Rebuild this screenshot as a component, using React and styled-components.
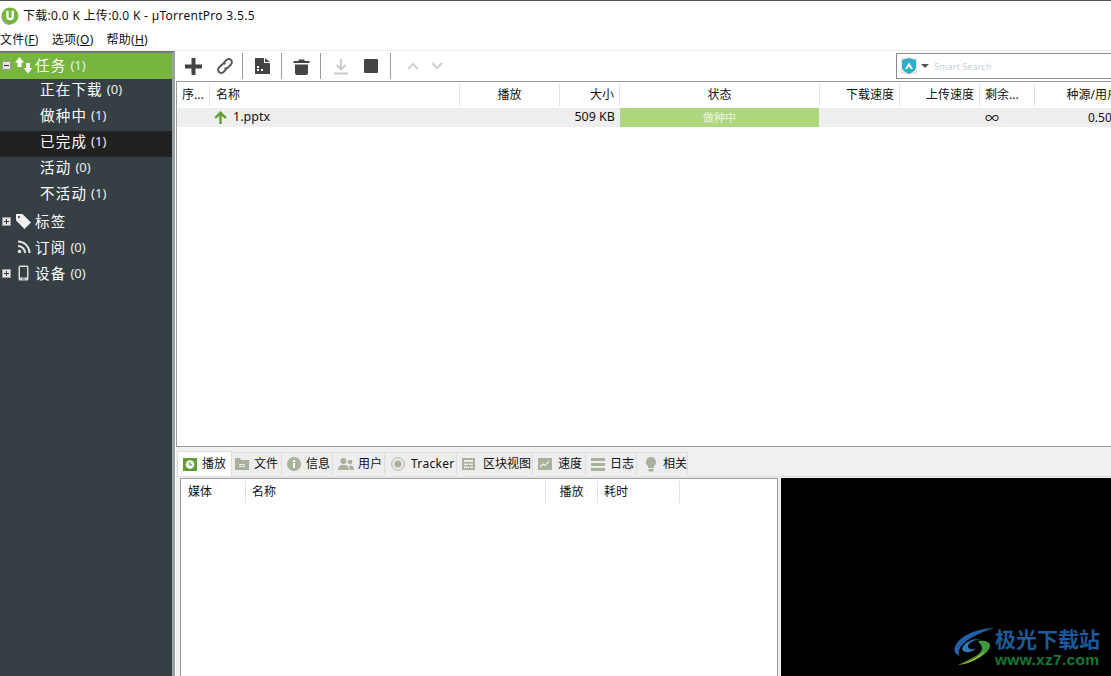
import React from "react";
import styled, { createGlobalStyle } from "styled-components";

const Global = createGlobalStyle`
  html, body { margin: 0; padding: 0; overflow: hidden; background: #fff; }
  * { box-sizing: border-box; }
`;
const FONT = `"Noto Sans", "Noto Sans CJK SC", sans-serif`;

const Page = styled.div`
  position: relative; width: 1111px; height: 676px; overflow: hidden;
  display: flex; flex-direction: column; background: #fff; color: #111;
  font: 12px/1 ${FONT};
`;
const TopStrip = styled.div`height: 1px; flex: none; background: #555;`;
const TitleBar = styled.div`
  height: 30px; flex: none; display: flex; align-items: center; gap: 4px; padding: 0 0 0 1px;
  font-size: 12px; letter-spacing: .3px; color: #111;
`;
const MenuBar = styled.div`
  height: 20px; flex: none; display: flex; gap: 13px; align-items: center; color: #111; font-size: 12px; letter-spacing: .25px;
  padding-bottom: 1px; border-bottom: 1px solid #eee;
`;
const Mnemonic = styled.span`text-decoration: underline;`;
const Main = styled.div`flex: 1; display: flex; min-height: 0;`;
const Sidebar = styled.div`
  width: 175px; flex: none; background: #353f44; border-right: 3px solid #9aa0a3; border-top: 2px solid #6f787c;
  color: #fff; display: flex; flex-direction: column;
`;
const TreeRow = styled.div`
  height: 26px; flex: none; display: flex; align-items: center;
  padding: 0 0 ${p => p.$child ? "6px" : "2px"} ${p => p.$child ? "40px" : "0"};
  background: ${p => p.$tone === "green" ? "#76b53e" : p.$tone === "dark" ? "#212121" : "transparent"};
  font-size: 14.5px; letter-spacing: 1.2px;
`;
const TreeCount = styled.span`font-size: 13px; margin-left: 4px; letter-spacing: 0; color: #e6f0f5;`;
const Expander = styled.span`
  width: 9px; height: 9px; flex: none; margin: 1px 0 0 2px; background: #e4e4e4; border: 1px solid #9a9a9a;
  position: relative;
  &::before { content: ""; position: absolute; left: 1px; right: 1px; top: 3px; height: 1px; background: #334; }
  ${p => p.$plus && `&::after { content: ""; position: absolute; top: 1px; bottom: 1px; left: 3px; width: 1px; background: #334; }`}
`;
const ExpanderGap = styled.span`width: 11px; flex: none;`;
const TreeIcon = styled.span`width: 23px; height: 20px; flex: none; display: flex; align-items: center; justify-content: center; margin-left: 1px;`;

const Content = styled.div`flex: 1; min-width: 0; display: flex; flex-direction: column; padding-left: 1px;`;
const Toolbar = styled.div`height: 30px; flex: none; display: flex; align-items: center; padding-left: 2px;`;
const ToolBtn = styled.span`width: ${p => p.$w || 31}px; height: 24px; flex: none; display: flex; align-items: center; justify-content: center;`;
const ToolSep = styled.span`width: 1px; height: 26px; margin: 0 ${p => p.$mr}px 0 ${p => p.$ml}px; flex: none; background: #9a9a9a;`;
const SearchBox = styled.div`
  margin-left: auto; width: 215px; height: 26px; border: 1px solid #8c8c8c; border-right: none; display: flex; align-items: center; padding-left: 4px; gap: 3px;
  color: #c4cfd8; font-size: 9px; letter-spacing: .1px; align-self: flex-end; margin-bottom: 2px;
`;
const Caret = styled.span`width: 0; height: 0; border: 4px solid transparent; border-top: 4px solid #555; border-bottom: none; margin: 0 2px 0 1px;`;

const TablePanel = styled.div`
  height: 366px; flex: none; border: 1px solid #999; border-width: 1px 0 1px 1px; background: #fff; overflow: hidden;
`;
const Row = styled.div`display: flex; height: ${p => p.$h}px; background: ${p => p.$bg || "transparent"}; align-items: center;`;
const HeadCell = styled.div`
  width: ${p => p.$w}px; flex: none; height: 22px; padding: 0 5px 0 ${p => p.$pl ?? 5}px; display: flex; align-items: center; white-space: nowrap; overflow: hidden;
  justify-content: ${p => p.$a === "r" ? "flex-end" : p.$a === "c" ? "center" : "flex-start"};
  border-right: 1px solid #e3e3e3; color: #111; font-size: 12px;
`;
const Cell = styled(HeadCell)`height: 19px; border-right: none; font-size: ${p => p.$fs || 12}px;`;
const NameCell = styled(Cell)`gap: 6px;`;
const StatusCell = styled.div`
  width: ${p => p.$w}px; flex: none; height: 19px; margin-right: 1px; background: #aed67c; color: #eef7e0; display: flex; align-items: center; justify-content: center; font-size: 11px;
`;
const TabStrip = styled.div`
  height: 30px; flex: none; background: #f0f0f0; display: flex; align-items: flex-end; padding: 0 0 1px 1px; border-bottom: 1px solid #ddd;
`;
const Tab = styled.div`
  height: ${p => p.$on ? "25px" : "23px"}; width: ${p => p.$w}px; flex: none; display: flex; align-items: center;
  gap: ${p => p.$gap}px; padding-left: ${p => p.$pad}px;
  background: ${p => p.$on ? "#fff" : "#eee"}; border: 1px solid #ddd; border-left-width: ${p => p.$on ? 1 : 0}px; border-bottom: none;
  font-size: 12px; color: #111; white-space: nowrap; overflow: hidden;
  margin-bottom: ${p => p.$on ? "-1px" : "0"}; position: relative;
`;
const TabLabel = styled.span`letter-spacing: ${p => p.$ls || 0}px;`;
const Lower = styled.div`flex: 1; min-height: 0; display: flex; background: #f0f0f0; padding: 1px 0 0 4px;`;
const MediaList = styled.div`width: 598px; flex: none; background: #fff; border: 1px solid #999; border-bottom: none; padding-top: 2px;`;
const MediaHead = styled(HeadCell)`height: 22px; font-size: 12px;`;
const Preview = styled.div`flex: 1; background: #000; margin-left: 3px;`;

const Watermark = styled.div`position: absolute; right: 6px; bottom: 5px; width: 156px; height: 47px;`;
const SwirlSvg = styled.svg`position: absolute; left: 3px; top: 3px;`;
const MarkTitle = styled.div`
  position: absolute; left: 46px; top: 2px; color: #1a5a9a; font: 700 21px/24px "Noto Sans CJK SC", sans-serif; white-space: nowrap;
`;
const MarkUrl = styled.div`
  position: absolute; left: 46px; top: 28px; color: #0e7a35; font: 700 15.5px/16px "Liberation Sans", sans-serif; white-space: nowrap; letter-spacing: .3px;
`;

const Gray = "#444";
const Off = "#c9c9c9";
const Tag = "#a9b09c";

const Logo = () => (
  <svg width="18" height="18" viewBox="0 0 17 17">
    <circle cx="8.500" cy="8.500" r="8" fill="#76b53e" />
    <path d="M5 3.500v5.500a3.600 3.600 0 0 0 7.200 0v-5.500h-2.200v5.500a1.400 1.400 0 0 1-2.800 0v-5.500z" fill="#fff" />
    <path d="M1 9c0 4.500 3 7.500 7.500 7.500" stroke="#9a9a9a" fill="none" />
  </svg>
);
const ArrowsIcon = () => (
  <svg width="20" height="20" viewBox="0 0 20 20" fill="#fff">
    <path d="M5.500 2 10 7.500H7.500V12h-4V7.500H1z" />
    <path d="M12 8h4v5h2.500L14 18.500 9.500 13H12z" fill="#f2f2f2" />
  </svg>
);
const TagIcon = () => (
  <svg width="17" height="17" viewBox="0 0 17 17" fill="#f0f0f0">
    <path fillRule="evenodd" d="M1 1h6.500L16 9.500 9.500 16 1 7.500zM4 3a1 1 0 1 0 0 2.200A1 1 0 0 0 4 3z" />
  </svg>
);
const RssIcon = () => (
  <svg width="14" height="14" viewBox="0 0 14 14" fill="none" stroke="#e2e2e2" strokeWidth="2">
    <circle cx="2.500" cy="11.500" r="1.800" fill="#e2e2e2" stroke="none" />
    <path d="M1 6a7 7 0 0 1 7 7" />
    <path d="M1 1.500A11.500 11.500 0 0 1 12.500 13" />
  </svg>
);
const PhoneIcon = () => (
  <svg width="11" height="16" viewBox="0 0 11 16">
    <rect x=".5" y=".5" width="10" height="15" rx="1.500" fill="#d8d8d8" />
    <rect x="2" y="2" width="7" height="10.500" fill="#353f44" />
    <rect x="4" y="13.300" width="3" height="1.200" fill="#777" />
  </svg>
);

const Plus = () => (
  <svg width="17" height="17" viewBox="0 0 17 17" fill={Gray}><path d="M6.500 0h4v6.500H17v4h-6.500V17h-4v-6.500H0v-4h6.500z" /></svg>
);
const LinkIcon = () => (
  <svg width="18" height="18" viewBox="0 0 18 18" fill="none" stroke="#555" strokeWidth="1.800">
    <path d="M7.500 6 10.500 3a3 3 0 0 1 4.500 4.500l-3 3a3 3 0 0 1-3.500.5" />
    <path d="M10.500 12l-3 3A3 3 0 0 1 3 10.500l3-3a3 3 0 0 1 3.500-.5" />
  </svg>
);
const FileIcon = () => (
  <svg width="15" height="16" viewBox="0 0 15 16" fill={Gray}>
    <path fillRule="evenodd" d="M0 0h9v5h6v11H0zM10 0l5 4h-5zM2 11v2h2v-2zM2 8v2h2V8zM6 11v2h2v-2z" />
  </svg>
);
const TrashIcon = () => (
  <svg width="17" height="17" viewBox="0 0 17 17" fill={Gray}>
    <path d="M5.500 1.500h6V3h5v2H.5V3h5z" />
    <path d="M2 6.500h13V15a2 2 0 0 1-2 2H4a2 2 0 0 1-2-2z" />
  </svg>
);
const DownIcon = () => (
  <svg width="16" height="17" viewBox="0 0 16 17" fill="none" stroke={Off} strokeWidth="1.800">
    <path d="M8 1v10M3.500 7 8 11.500 12.500 7" />
    <path d="M1 15.500h14" strokeWidth="2" />
  </svg>
);
const StopIcon = () => (
  <svg width="14" height="14" viewBox="0 0 14 14"><rect width="14" height="14" rx="1" fill={Gray} /></svg>
);
const Chevron = ({ up }) => (
  <svg width="12" height="8" viewBox="0 0 12 8" fill="none" stroke="#d0d0d0" strokeWidth="2">
    <path d={up ? "M1 7 6 2l5 5" : "M1 1l5 5 5-5"} />
  </svg>
);
const Shield = () => (
  <svg width="16" height="16" viewBox="0 0 16 16">
    <rect width="16" height="16" fill="#e6e6e6" />
    <path d="M8 0 15 2v7c0 3-3 5-7 7-4-2-7-4-7-7V2z" fill="#2db0c6" />
    <path d="M8 4.500 12 11h-2L8 8.500 6 11H4z" fill="#fff" />
  </svg>
);
const UpArrow = () => (
  <svg width="13" height="13" viewBox="0 0 13 13" fill="none" stroke="#5f9e35" strokeWidth="2.400">
    <path d="M6.500 13V2M1.200 7 6.500 1.800 11.800 7" />
  </svg>
);

const TabClock = () => (
  <svg width="14" height="13" viewBox="0 0 14 13">
    <rect width="14" height="13" fill="#5f9e35" />
    <circle cx="7" cy="6.500" r="4.300" fill="#fff" />
    <path d="M7 4v2.800h2.300" stroke="#5f9e35" fill="none" strokeWidth="1.200" />
  </svg>
);
const TabFolder = () => (
  <svg width="14" height="12" viewBox="0 0 14 12">
    <path d="M0 0h5l1 2h8v10H0z" fill={Tag} />
    <path d="M4 6.500h6M4 8.500h6" stroke="#eee" />
  </svg>
);
const TabInfo = () => (
  <svg width="14" height="14" viewBox="0 0 14 14">
    <circle cx="7" cy="7" r="7" fill={Tag} />
    <rect x="6" y="6" width="2.200" height="5" fill="#fff" />
    <rect x="6" y="3" width="2.200" height="2" fill="#fff" />
  </svg>
);
const TabPeers = () => (
  <svg width="16" height="12" viewBox="0 0 16 12" fill={Tag}>
    <circle cx="5.500" cy="3" r="3" /><path d="M0 12c0-4 2-5 5.500-5s5.500 1 5.500 5z" />
    <circle cx="12" cy="4" r="2.300" /><path d="M11.800 12h4.200c0-3-1-4.500-4-4.500l-1 .5c.6 1 .8 2.500.8 4z" />
  </svg>
);
const TabTracker = () => (
  <svg width="14" height="14" viewBox="0 0 14 14">
    <circle cx="7" cy="7" r="6.300" fill="none" stroke={Tag} />
    <circle cx="7" cy="7" r="3.500" fill={Tag} />
  </svg>
);
const TabPieces = () => (
  <svg width="13" height="12" viewBox="0 0 13 12">
    <rect width="13" height="12" fill={Tag} />
    <path d="M2 2h9v2H2zM2 5.500h4v1.500H2zM7 5.500h4v1.500H7zM2 8.500h5V10H2zM8 8.500h3V10H8z" fill="#eee" />
  </svg>
);
const TabSpeed = () => (
  <svg width="14" height="12" viewBox="0 0 14 12">
    <rect width="14" height="12" fill={Tag} />
    <path d="M2 9l3-3 2 1.500L11 3.500" stroke="#eee" fill="none" strokeWidth="1.200" />
  </svg>
);
const TabLog = () => (
  <svg width="14" height="13" viewBox="0 0 14 13" fill={Tag}>
    <rect width="14" height="3" /><rect y="5" width="14" height="3" /><rect y="10" width="14" height="3" />
  </svg>
);
const TabBulb = () => (
  <svg width="12" height="15" viewBox="0 0 12 15" fill={Tag}>
    <path d="M6 0a5 5 0 0 1 3 9v2H3V9a5 5 0 0 1 3-9z" />
    <rect x="3.500" y="12" width="5" height="2.500" />
  </svg>
);

const Swirl = () => (
  <SwirlSvg width="44" height="39" viewBox="0 0 44 42" preserveAspectRatio="none">
    <path d="M42 1C24 2 8 9 3 21c-2 5 1 9 5 10C4 25 10 12 42 1z" fill="#1f62a8" />
    <path d="M10 24c1-7 10-12 18-11-6 1-12 4-12 8 0 3 4 4 8 2-4 5-12 6-14 1z" fill="#2b7bb8" />
    <path d="M26 15c7-1 12 1 12 5 0 8-14 17-32 21 10-5 24-11 24-18 0-3-2-5-4-8z" fill="#3f9a3a" />
    <path d="M6 41c10-3 20-8 27-15-4 7-14 13-27 15z" fill="#b7b52a" />
  </SwirlSvg>
);

const tree = [
  { label: "正在下载", n: 0 },
  { label: "做种中", n: 1 },
  { label: "已完成", n: 1, tone: "dark" },
  { label: "活动", n: 0 },
  { label: "不活动", n: 1 },
];
const cols = [
  ["序...", 33, "l", 5], ["名称", 250, "l", 6], ["播放", 100, "c", 5], ["大小", 60, "r", 5], ["状态", 200, "c", 5],
  ["下载速度", 80, "r", 5], ["上传速度", 80, "r", 5], ["剩余...", 55, "l", 5], ["种源/用户比", 102, "r", 5],
];
const tabs = [
  { l: "播放", I: TabClock, w: 55, pad: 5, gap: 5, on: true },
  { l: "文件", I: TabFolder, w: 50, pad: 3, gap: 5 },
  { l: "信息", I: TabInfo, w: 51, pad: 5, gap: 5 },
  { l: "用户", I: TabPeers, w: 52, pad: 5, gap: 4 },
  { l: "Tracker", I: TabTracker, w: 72, pad: 6, gap: 6, ls: 0.3 },
  { l: "区块视图", I: TabPieces, w: 76, pad: 5, gap: 8 },
  { l: "速度", I: TabSpeed, w: 53, pad: 5, gap: 6 },
  { l: "日志", I: TabLog, w: 51, pad: 5, gap: 5 },
  { l: "相关", I: TabBulb, w: 51, pad: 8, gap: 6 },
];

export default function App() {
  return (
    <Page>
      <Global />
      <TopStrip />
      <TitleBar><Logo /><span>下载:0.0 K 上传:0.0 K - µTorrentPro 3.5.5</span></TitleBar>
      <MenuBar>
        <span>文件(<Mnemonic>F</Mnemonic>)</span>
        <span>选项(<Mnemonic>O</Mnemonic>)</span>
        <span>帮助(<Mnemonic>H</Mnemonic>)</span>
      </MenuBar>
      <Main>
        <Sidebar>
          <TreeRow $tone="green"><Expander /><TreeIcon><ArrowsIcon /></TreeIcon>任务<TreeCount>(1)</TreeCount></TreeRow>
          {tree.map(t => (
            <TreeRow key={t.label} $child $tone={t.tone}>{t.label}<TreeCount>({t.n})</TreeCount></TreeRow>
          ))}
          <TreeRow><Expander $plus /><TreeIcon><TagIcon /></TreeIcon>标签</TreeRow>
          <TreeRow><ExpanderGap /><TreeIcon><RssIcon /></TreeIcon>订阅<TreeCount>(0)</TreeCount></TreeRow>
          <TreeRow><Expander $plus /><TreeIcon><PhoneIcon /></TreeIcon>设备<TreeCount>(0)</TreeCount></TreeRow>
        </Sidebar>
        <Content>
          <Toolbar>
            <ToolBtn><Plus /></ToolBtn>
            <ToolBtn><LinkIcon /></ToolBtn>
            <ToolSep $ml={2} $mr={4} />
            <ToolBtn><FileIcon /></ToolBtn>
            <ToolSep $ml={3} $mr={4} />
            <ToolBtn><TrashIcon /></ToolBtn>
            <ToolSep $ml={3} $mr={4} />
            <ToolBtn><DownIcon /></ToolBtn>
            <ToolBtn $w={30}><StopIcon /></ToolBtn>
            <ToolSep $ml={4} $mr={10} />
            <ToolBtn $w={24}><Chevron up /></ToolBtn>
            <ToolBtn $w={24}><Chevron /></ToolBtn>
            <SearchBox><Shield /><Caret /><span>Smart Search</span></SearchBox>
          </Toolbar>
          <TablePanel>
            <Row $h={26}>
              {cols.map(([l, w, a, pl]) => <HeadCell key={l} $w={w} $a={a} $pl={pl}>{l}</HeadCell>)}
            </Row>
            <Row $h={19} $bg="#eee">
              <Cell $w={33} />
              <NameCell $w={250} $pl={4} $fs={12.5}><UpArrow />1.pptx</NameCell>
              <Cell $w={100} />
              <Cell $w={60} $a="r" $fs={12.5}>509 KB</Cell>
              <StatusCell $w={199}>做种中</StatusCell>
              <Cell $w={80} />
              <Cell $w={80} />
              <Cell $w={55} $fs={14}>∞</Cell>
              <Cell $w={102} $pl={53}>0.50</Cell>
            </Row>
          </TablePanel>
          <TabStrip>
            {tabs.map(({ l, I, w, pad, gap, on, ls }) => (
              <Tab key={l} $w={w} $on={on} $pad={pad} $gap={gap}><I /><TabLabel $ls={ls}>{l}</TabLabel></Tab>
            ))}
          </TabStrip>
          <Lower>
            <MediaList>
              <Row $h={22}>
                <MediaHead $w={65} $pl={7}>媒体</MediaHead>
                <MediaHead $w={300} $pl={6}>名称</MediaHead>
                <MediaHead $w={52} $a="c">播放</MediaHead>
                <MediaHead $w={82} $pl={6}>耗时</MediaHead>
              </Row>
            </MediaList>
            <Preview />
          </Lower>
        </Content>
      </Main>
      <Watermark>
        <Swirl />
        <MarkTitle>极光下载站</MarkTitle>
        <MarkUrl>www.xz7.com</MarkUrl>
      </Watermark>
    </Page>
  );
}
